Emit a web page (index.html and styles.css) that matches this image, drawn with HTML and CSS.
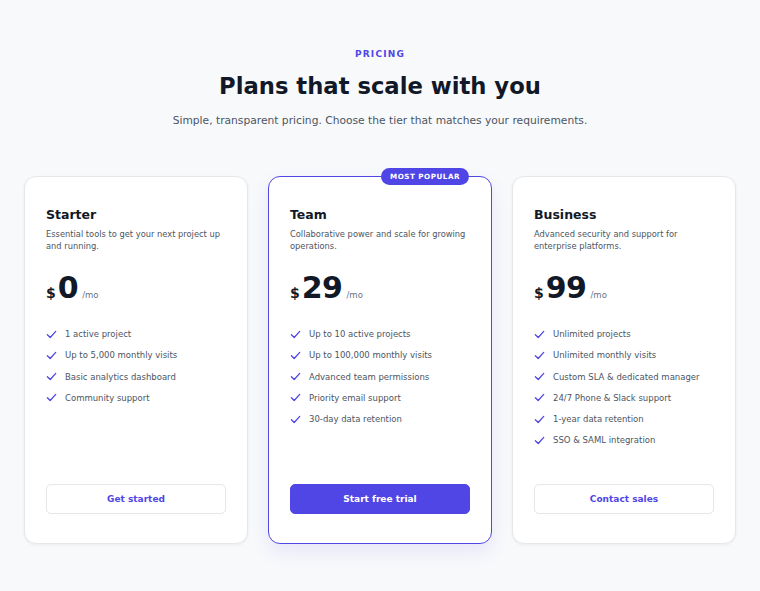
FILE: index.html
```html
<!DOCTYPE html>
<html lang="en">
<head>
<meta charset="utf-8">
<title>Pricing</title>
<link rel="stylesheet" href="styles.css">
</head>
<body>
<main class="pricing">
  <header class="intro">
    <p class="eyebrow">Pricing</p>
    <h1 class="title">Plans that scale with you</h1>
    <p class="lead">Simple, transparent pricing. Choose the tier that matches your requirements.</p>
  </header>

  <section class="plans">
    <article class="plan">
      <h2 class="plan-name">Starter</h2>
      <p class="plan-desc">Essential tools to get your next project up and running.</p>
      <div class="price"><span class="currency">$</span><span class="amount">0</span><span class="period">/mo</span></div>
      <ul class="features">
        <li><svg class="check" viewBox="0 0 12 12"><path d="M1.5 6.2 L4.6 9.3 L10.6 2.6"/></svg>1 active project</li>
        <li><svg class="check" viewBox="0 0 12 12"><path d="M1.5 6.2 L4.6 9.3 L10.6 2.6"/></svg>Up to 5,000 monthly visits</li>
        <li><svg class="check" viewBox="0 0 12 12"><path d="M1.5 6.2 L4.6 9.3 L10.6 2.6"/></svg>Basic analytics dashboard</li>
        <li><svg class="check" viewBox="0 0 12 12"><path d="M1.5 6.2 L4.6 9.3 L10.6 2.6"/></svg>Community support</li>
      </ul>
      <a class="btn btn-outline" href="#">Get started</a>
    </article>

    <article class="plan plan-featured">
      <span class="badge">Most popular</span>
      <h2 class="plan-name">Team</h2>
      <p class="plan-desc">Collaborative power and scale for growing operations.</p>
      <div class="price"><span class="currency">$</span><span class="amount">29</span><span class="period">/mo</span></div>
      <ul class="features">
        <li><svg class="check" viewBox="0 0 12 12"><path d="M1.5 6.2 L4.6 9.3 L10.6 2.6"/></svg>Up to 10 active projects</li>
        <li><svg class="check" viewBox="0 0 12 12"><path d="M1.5 6.2 L4.6 9.3 L10.6 2.6"/></svg>Up to 100,000 monthly visits</li>
        <li><svg class="check" viewBox="0 0 12 12"><path d="M1.5 6.2 L4.6 9.3 L10.6 2.6"/></svg>Advanced team permissions</li>
        <li><svg class="check" viewBox="0 0 12 12"><path d="M1.5 6.2 L4.6 9.3 L10.6 2.6"/></svg>Priority email support</li>
        <li><svg class="check" viewBox="0 0 12 12"><path d="M1.5 6.2 L4.6 9.3 L10.6 2.6"/></svg>30-day data retention</li>
      </ul>
      <a class="btn btn-primary" href="#">Start free trial</a>
    </article>

    <article class="plan">
      <h2 class="plan-name">Business</h2>
      <p class="plan-desc">Advanced security and support for enterprise platforms.</p>
      <div class="price"><span class="currency">$</span><span class="amount">99</span><span class="period">/mo</span></div>
      <ul class="features">
        <li><svg class="check" viewBox="0 0 12 12"><path d="M1.5 6.2 L4.6 9.3 L10.6 2.6"/></svg>Unlimited projects</li>
        <li><svg class="check" viewBox="0 0 12 12"><path d="M1.5 6.2 L4.6 9.3 L10.6 2.6"/></svg>Unlimited monthly visits</li>
        <li><svg class="check" viewBox="0 0 12 12"><path d="M1.5 6.2 L4.6 9.3 L10.6 2.6"/></svg>Custom SLA &amp; dedicated manager</li>
        <li><svg class="check" viewBox="0 0 12 12"><path d="M1.5 6.2 L4.6 9.3 L10.6 2.6"/></svg>24/7 Phone &amp; Slack support</li>
        <li><svg class="check" viewBox="0 0 12 12"><path d="M1.5 6.2 L4.6 9.3 L10.6 2.6"/></svg>1-year data retention</li>
        <li><svg class="check" viewBox="0 0 12 12"><path d="M1.5 6.2 L4.6 9.3 L10.6 2.6"/></svg>SSO &amp; SAML integration</li>
      </ul>
      <a class="btn btn-outline" href="#">Contact sales</a>
    </article>
  </section>
</main>
</body>
</html>
```

FILE: styles.css
```css
* { box-sizing: border-box; }

html, body {
  margin: 0;
  padding: 0;
}

body {
  background: #f8f9fb;
  font-family: "DejaVu Sans", sans-serif;
  color: #111827;
}

.pricing {
  padding: 48px 24px 40px;
}

.intro {
  text-align: center;
}

.eyebrow {
  margin: 0;
  font-size: 9px;
  font-weight: 700;
  letter-spacing: 1.2px;
  text-transform: uppercase;
  color: #4f46e5;
  line-height: 12px;
}

.title {
  margin: 10px 0 0;
  font-size: 22.7px;
  font-weight: 700;
  line-height: 32px;
  color: #111827;
}

.lead {
  margin: 11px 0 0;
  font-size: 10.7px;
  line-height: 16px;
  color: #4b5563;
}

.plans {
  margin-top: 47px;
  display: grid;
  grid-template-columns: repeat(3, 1fr);
  gap: 20px;
}

.plan {
  position: relative;
  display: flex;
  flex-direction: column;
  background: #ffffff;
  border: 1px solid #e5e7eb;
  border-radius: 12px;
  padding: 30px 21px 29px;
  box-shadow: 0 1px 3px rgba(17, 24, 39, 0.06);
}

.plan-featured {
  border: 1.5px solid #5048e0;
  box-shadow: 0 8px 18px rgba(79, 70, 229, 0.10);
}

/* pill sitting on the top border of the featured plan */
.badge {
  position: absolute;
  top: -9px;
  right: 22px;
  background: #4f46e5;
  color: #ffffff;
  font-size: 7.2px;
  font-weight: 700;
  letter-spacing: 0.5px;
  text-transform: uppercase;
  line-height: 17px;
  padding: 0 9px;
  border-radius: 9px;
}

.plan-name {
  margin: 0;
  font-size: 12.5px;
  font-weight: 700;
  line-height: 16px;
  color: #111827;
}

.plan-desc {
  margin: 5px 0 0;
  font-size: 8.3px;
  line-height: 12px;
  color: #4b5563;
  min-height: 24px;
}

.price {
  margin-top: 19px;
  display: flex;
  align-items: baseline;
  color: #111827;
}

.currency {
  font-size: 14px;
  font-weight: 700;
}

.amount {
  font-size: 30px;
  font-weight: 700;
  line-height: 34px;
  letter-spacing: -0.5px;
  margin-left: 2px;
}

.period {
  font-size: 8.5px;
  color: #6b7280;
  margin-left: 4px;
}

.features {
  list-style: none;
  margin: 23px 0 38px;
  padding: 0;
  display: flex;
  flex-direction: column;
  gap: 9.3px;
}

.features li {
  display: flex;
  align-items: center;
  gap: 8px;
  font-size: 8.5px;
  line-height: 12px;
  color: #4b5563;
}

.check {
  width: 11px;
  height: 11px;
  flex: none;
  fill: none;
  stroke: #4f46e5;
  stroke-width: 1.4;
  stroke-linecap: round;
  stroke-linejoin: round;
}

.btn {
  margin-top: auto;
  display: block;
  text-align: center;
  text-decoration: none;
  font-size: 9px;
  font-weight: 700;
  line-height: 28px;
  border-radius: 5px;
}

.btn-outline {
  color: #4f46e5;
  background: #ffffff;
  border: 1px solid #e5e7eb;
}

.btn-primary {
  color: #ffffff;
  background: #4f46e5;
  border: 1px solid #4f46e5;
}
```
